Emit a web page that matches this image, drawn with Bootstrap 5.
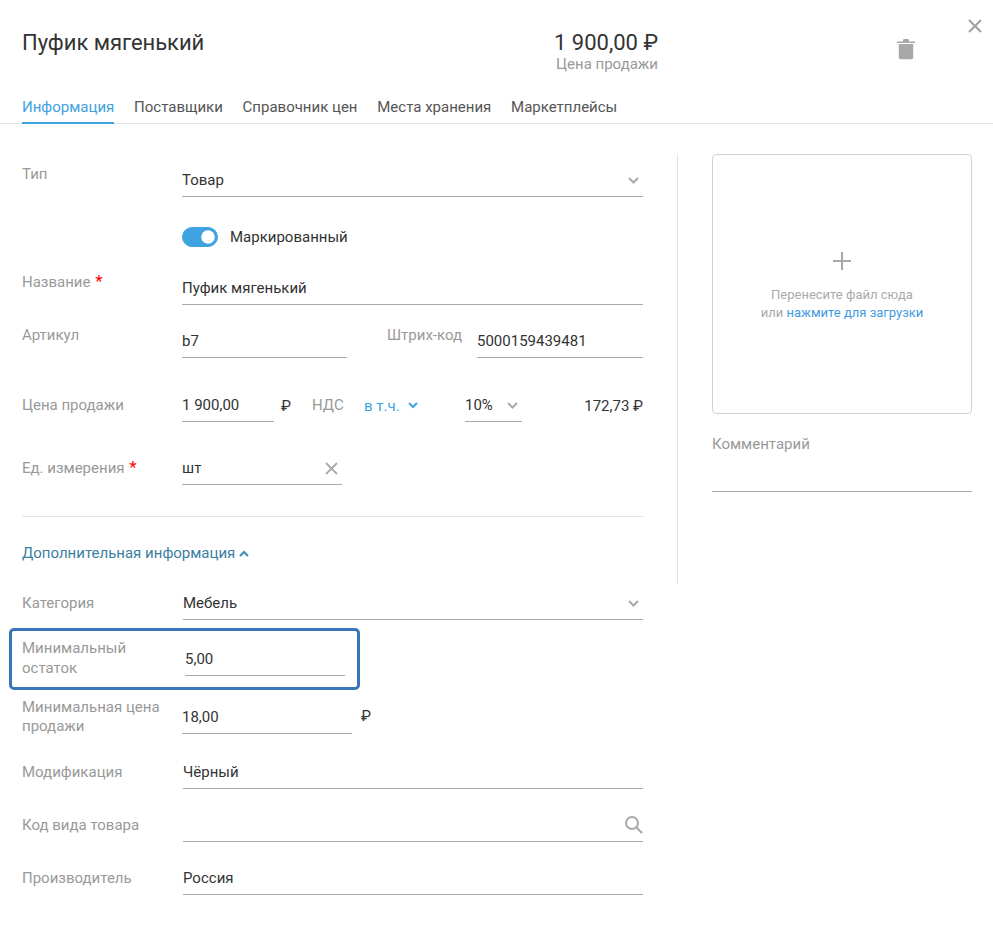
<!DOCTYPE html>
<html lang="ru">
<head>
<meta charset="utf-8">
<title>Пуфик мягенький</title>
<link href="https://cdn.jsdelivr.net/npm/bootstrap@5.3.0/dist/css/bootstrap.min.css" rel="stylesheet">
<style>
body{font-family:Roboto,"Liberation Sans",sans-serif;font-size:15px;line-height:20px;color:#333;background:#fff;height:930px;overflow:hidden}
.dlg-head{padding:29px 22px 0;height:97px}
.dlg-title{font-size:22px;line-height:28px;font-weight:400;margin:0;width:533px;color:#333;letter-spacing:-.05px}
.price-block{width:103px;display:flex;flex-direction:column;align-items:flex-end;white-space:nowrap}
.price-val{font-size:22px;line-height:28px}
.price-cap{color:#999;line-height:14px}
.trash-wrap{margin-left:238px;margin-top:9px;line-height:0}
.close-x{position:absolute;top:19px;right:11px;line-height:0}
.tabs{gap:19.75px;padding:0 22px;border-bottom:1px solid #e4e4e4;height:27px}
.tabs .nav-link{padding:0;height:27px;line-height:20px;color:#555;border-bottom:2px solid transparent}
.tabs .nav-link.active{color:#3ea3e0;border-bottom-color:#3ea3e0}
.body-wrap{padding:30px 21px 0 22px}
.left-col{width:621px;flex:none}
.vline{width:1px;height:430px;background:#e4e4e4;margin:0 34px;flex:none}
.right-col{width:260px;flex:none}
.lbl{color:#999;width:160px;flex:none;line-height:19px;padding:1px 0}
.lbl-w{width:161px}
.fld{height:33px;border-bottom:1px solid #aaa;display:flex;align-items:center;justify-content:space-between;color:#333}
.req{color:#f00;font-size:17px;margin-left:1px;line-height:0}
.dropbox{height:260px;border:1px solid #d2d2d2;border-radius:4px;padding-top:96px;text-align:center;font-size:13px;line-height:18px;color:#aaa}
.dropbox a{color:#3f9ae2;text-decoration:none}
.drop-plus{display:block;margin:0 auto 15px;line-height:0}
.comment-lbl{color:#999;margin-top:20px}
.comment-line{height:38px;border-bottom:1px solid #aaa}
.sw .form-check-input{width:36px;height:20px;margin:0 12px 0 0;float:none;background-color:#3ea3e0;border-color:#3ea3e0}
.sw.form-check{padding:0;margin:0;min-height:20px}
.link-vat{color:#3ea3e0;font-size:15px;width:101px}
.sep{height:1px;background:#e4e4e4;margin:31px 0 26px}
.more-link{color:#3b7f9f;height:20px;text-decoration:none;display:flex;align-items:center;gap:4px}
.hilite{border:3px solid #3a75b8;border-radius:5px;height:62px;width:351px;margin:8px 0 7px -13px;padding:7px 0 0 10px;display:flex}
.hilite .lbl{width:163px;padding:0 40px 0 0;line-height:20px}
.hilite .fld{width:160px;margin-top:5px}
.w-art{width:165px}
.gap-a{margin-top:10px}
.gap-b{margin-top:30px}
.gap-c{margin-top:25px}
.gap-d{margin-top:20px}
.gap-e{margin-top:31px}
.gap-f{margin-top:24px}
.gap-g{margin-top:19px}
.code-lbl{width:115px}
.code-val{margin-left:15px}
.w-92{width:92px}
.rub-a{margin-left:7px;width:31px}
.w-52{width:52px}
.w-57{width:57px}
.w-160{width:160px}
.w-170{width:170px;margin-top:4px}
.rub-b{margin:9px 0 0 9px}
</style>
</head>
<body>
<div class="position-relative">
  <div class="dlg-head d-flex align-items-start">
    <h1 class="dlg-title">Пуфик мягенький</h1>
    <div class="price-block">
      <div class="price-val">1 900,00 ₽</div>
      <div class="price-cap">Цена продажи</div>
    </div>
    <div class="trash-wrap">
      <svg width="20" height="22" viewBox="0 0 20 22"><path fill="#a8a8a8" d="M1 3.500h18v1.600H1zM7 2.200Q7 1 8.500 1h3Q13 1 13 2.200v1.500H7zM2.800 6h14.400v13.600q0 1.600-1.600 1.600H4.400q-1.600 0-1.600-1.600z"/></svg>
    </div>
    <a class="close-x" href="#" aria-label="Закрыть"><svg width="14" height="14" viewBox="0 0 14 14"><path stroke="#a0a0a0" stroke-width="2" fill="none" d="M1 1l12 12M13 1L1 13"/></svg></a>
  </div>
  <ul class="nav tabs">
    <li class="nav-item"><a class="nav-link active" href="#">Информация</a></li>
    <li class="nav-item"><a class="nav-link" href="#">Поставщики</a></li>
    <li class="nav-item"><a class="nav-link" href="#">Справочник цен</a></li>
    <li class="nav-item"><a class="nav-link" href="#">Места хранения</a></li>
    <li class="nav-item"><a class="nav-link" href="#">Маркетплейсы</a></li>
  </ul>
  <div class="body-wrap d-flex align-items-start">
    <div class="left-col">
      <div class="d-flex gap-a">
        <div class="lbl">Тип</div>
        <div class="fld flex-grow-1"><span>Товар</span><svg class="me-1" width="11" height="7" viewBox="0 0 11 7"><path fill="none" stroke="#aaa" stroke-width="2" d="M1 1l4.500 4.500L10 1"/></svg></div>
      </div>
      <div class="d-flex gap-b">
        <div class="lbl"></div>
        <div class="form-check form-switch sw d-flex align-items-center"><input class="form-check-input" type="checkbox" checked id="sw1" aria-label="Маркированный"><label class="form-check-label" for="sw1">Маркированный</label></div>
      </div>
      <div class="d-flex gap-c">
        <div class="lbl">Название <span class="req">*</span></div>
        <div class="fld flex-grow-1">Пуфик мягенький</div>
      </div>
      <div class="d-flex gap-d">
        <div class="lbl">Артикул</div>
        <div class="fld w-art">b7</div>
        <div class="lbl text-end code-lbl">Штрих-код</div>
        <div class="fld flex-grow-1 code-val">5000159439481</div>
      </div>
      <div class="d-flex align-items-center gap-e">
        <div class="lbl">Цена продажи</div>
        <div class="fld w-92">1 900,00</div>
        <div class="rub-a">₽</div>
        <div class="lbl w-52">НДС</div>
        <a class="link-vat text-decoration-none d-flex align-items-center gap-2" href="#">в т.ч. <svg width="10" height="7" viewBox="0 0 10 7"><path fill="none" stroke="#3ea3e0" stroke-width="2" d="M1 1l4 4 4-4"/></svg></a>
        <div class="fld w-57"><span>10%</span><svg class="me-1" width="11" height="7" viewBox="0 0 11 7"><path fill="none" stroke="#aaa" stroke-width="2" d="M1 1l4.500 4.500L10 1"/></svg></div>
        <div class="flex-grow-1 text-end">172,73 ₽</div>
      </div>
      <div class="d-flex align-items-center gap-b">
        <div class="lbl">Ед. измерения <span class="req">*</span></div>
        <div class="fld w-160"><span>шт</span><svg class="me-1" width="13" height="13" viewBox="0 0 13 13"><path stroke="#aaa" stroke-width="1.800" fill="none" d="M1 1l11 11M12 1L1 12"/></svg></div>
      </div>
      <div class="sep"></div>
      <a class="more-link" href="#">Дополнительная информация <svg width="10" height="7" viewBox="0 0 10 7"><path fill="none" stroke="#3b8fb0" stroke-width="2" d="M1 6l4-4 4 4"/></svg></a>
      <div class="d-flex align-items-center gap-f">
        <div class="lbl lbl-w">Категория</div>
        <div class="fld flex-grow-1"><span>Мебель</span><svg class="me-1" width="11" height="7" viewBox="0 0 11 7"><path fill="none" stroke="#aaa" stroke-width="2" d="M1 1l4.500 4.500L10 1"/></svg></div>
      </div>
      <div class="hilite">
        <div class="lbl">Минимальный остаток</div>
        <div class="fld">5,00</div>
      </div>
      <div class="d-flex">
        <div class="lbl">Минимальная цена продажи</div>
        <div class="fld w-170">18,00</div>
        <div class="rub-b">₽</div>
      </div>
      <div class="d-flex align-items-center gap-g">
        <div class="lbl lbl-w">Модификация</div>
        <div class="fld flex-grow-1">Чёрный</div>
      </div>
      <div class="d-flex align-items-center gap-d">
        <div class="lbl lbl-w">Код вида товара</div>
        <div class="fld flex-grow-1"><span></span><svg width="18" height="18" viewBox="0 0 18 18"><circle cx="7" cy="7" r="6" fill="none" stroke="#aaa" stroke-width="2"/><path stroke="#aaa" stroke-width="2.200" d="M11.500 11.500l5.500 5.500"/></svg></div>
      </div>
      <div class="d-flex align-items-center gap-d">
        <div class="lbl lbl-w">Производитель</div>
        <div class="fld flex-grow-1">Россия</div>
      </div>
    </div>
    <div class="vline"></div>
    <div class="right-col">
      <div class="dropbox">
        <span class="drop-plus"><svg width="20" height="20" viewBox="0 0 20 20"><path stroke="#a8a8a8" stroke-width="2" fill="none" d="M10 1v18M1 10h18"/></svg></span>
        Перенесите файл сюда<br>или <a href="#">нажмите для загрузки</a>
      </div>
      <div class="comment-lbl">Комментарий</div>
      <div class="comment-line"></div>
    </div>
  </div>
</div>
</body>
</html>
